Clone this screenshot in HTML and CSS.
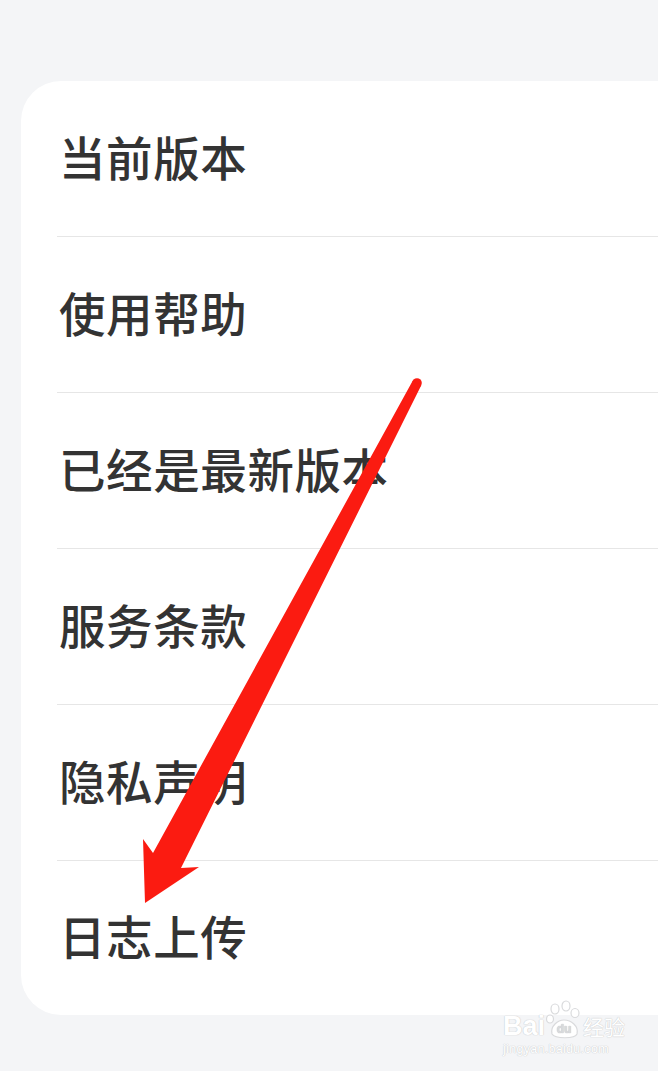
FILE: index.html
```html
<!DOCTYPE html>
<html lang="zh-CN">
<head>
    <meta charset="UTF-8">
    <meta name="viewport" content="width=device-width, initial-scale=1.0">
    <title>关于</title>
    <link rel="stylesheet" href="styles.css">
</head>
<body>

    <div class="card">
        <div class="row"><span class="label">当前版本</span></div>
        <div class="row"><span class="label">使用帮助</span></div>
        <div class="row"><span class="label">已经是最新版本</span></div>
        <div class="row"><span class="label">服务条款</span></div>
        <div class="row"><span class="label">隐私声明</span></div>
        <div class="row last"><span class="label">日志上传</span></div>
    </div>

    <!-- red annotation arrow drawn over the list -->
    <svg class="arrow" width="658" height="1071" viewBox="0 0 658 1071">
        <circle cx="417" cy="383" r="4.8" fill="#fb1b11"/>
        <polygon fill="#fb1b11" points="412.7,380.8 421.3,385.2 181,868 199,867 145,903 143,839 153,853"/>
    </svg>

    <div class="watermark">
        <div class="wm-top">
            <span class="wm-bai">Bai</span>
            <svg class="wm-paw" width="36" height="40" viewBox="0 0 36 40">
                <g fill="#ffffff" stroke="#d9dadc" stroke-width="1.2">
                    <ellipse cx="9" cy="9" rx="4" ry="5"/>
                    <ellipse cx="20" cy="6" rx="4" ry="5"/>
                    <ellipse cx="29" cy="13" rx="4" ry="4.5"/>
                    <ellipse cx="4" cy="19" rx="3.5" ry="4"/>
                    <path d="M6 34 C4 26 12 20 18 20 C25 20 33 26 31 34 C29 39 9 39 6 34 Z"/>
                </g>
                <text x="18" y="33" text-anchor="middle" class="wm-du">du</text>
            </svg>
            <span class="wm-jy">经验</span>
        </div>
        <div class="wm-url">jingyan.baidu.com</div>
    </div>

</body>
</html>
```

FILE: styles.css
```css
body {
    margin: 0;
    padding: 81px 0 56px 21px;
    background-color: #f4f5f7;
    font-family: "Noto Sans CJK SC", "Noto Sans", sans-serif;
    overflow: hidden;
    position: relative;
}

.card {
    background-color: #fff;
    border-radius: 40px 0 0 40px;
    padding-left: 36px;
}

.row {
    height: 156px;
    box-sizing: border-box;
    padding: 0 0 7px 2px;
    border-bottom: 1px solid #e6e6e6;
    display: flex;
    align-items: center;
}

.row.last {
    height: 154px;
    border-bottom: none;
}

.label {
    font-size: 46.5px;
    font-weight: 500;
    color: #333;
    letter-spacing: 0.6px;
}

.arrow {
    position: absolute;
    left: 0;
    top: 0;
    pointer-events: none;
}

.watermark {
    position: absolute;
    left: 503px;
    top: 998px;
    color: #fff;
    font-family: "Liberation Sans", Arial, sans-serif;
    text-shadow: 0 0 1px #c9cacc, 0 0 1px #c9cacc;
}

.wm-top {
    display: flex;
    align-items: flex-end;
    height: 42px;
}

.wm-bai {
    font-size: 27px;
    font-weight: bold;
    line-height: 26px;
    margin-bottom: 1px;
}

.wm-paw {
    margin: 0 1px 0 1px;
}

.wm-du {
    font-family: "Liberation Sans", Arial, sans-serif;
    font-size: 12px;
    font-weight: bold;
    fill: #d9dadc;
}

.wm-jy {
    font-family: "Noto Sans CJK SC", sans-serif;
    font-size: 21px;
    line-height: 26px;
    margin-bottom: 1px;
}

.wm-url {
    font-size: 12.5px;
    letter-spacing: 0.3px;
    margin-top: 2px;
}
```
